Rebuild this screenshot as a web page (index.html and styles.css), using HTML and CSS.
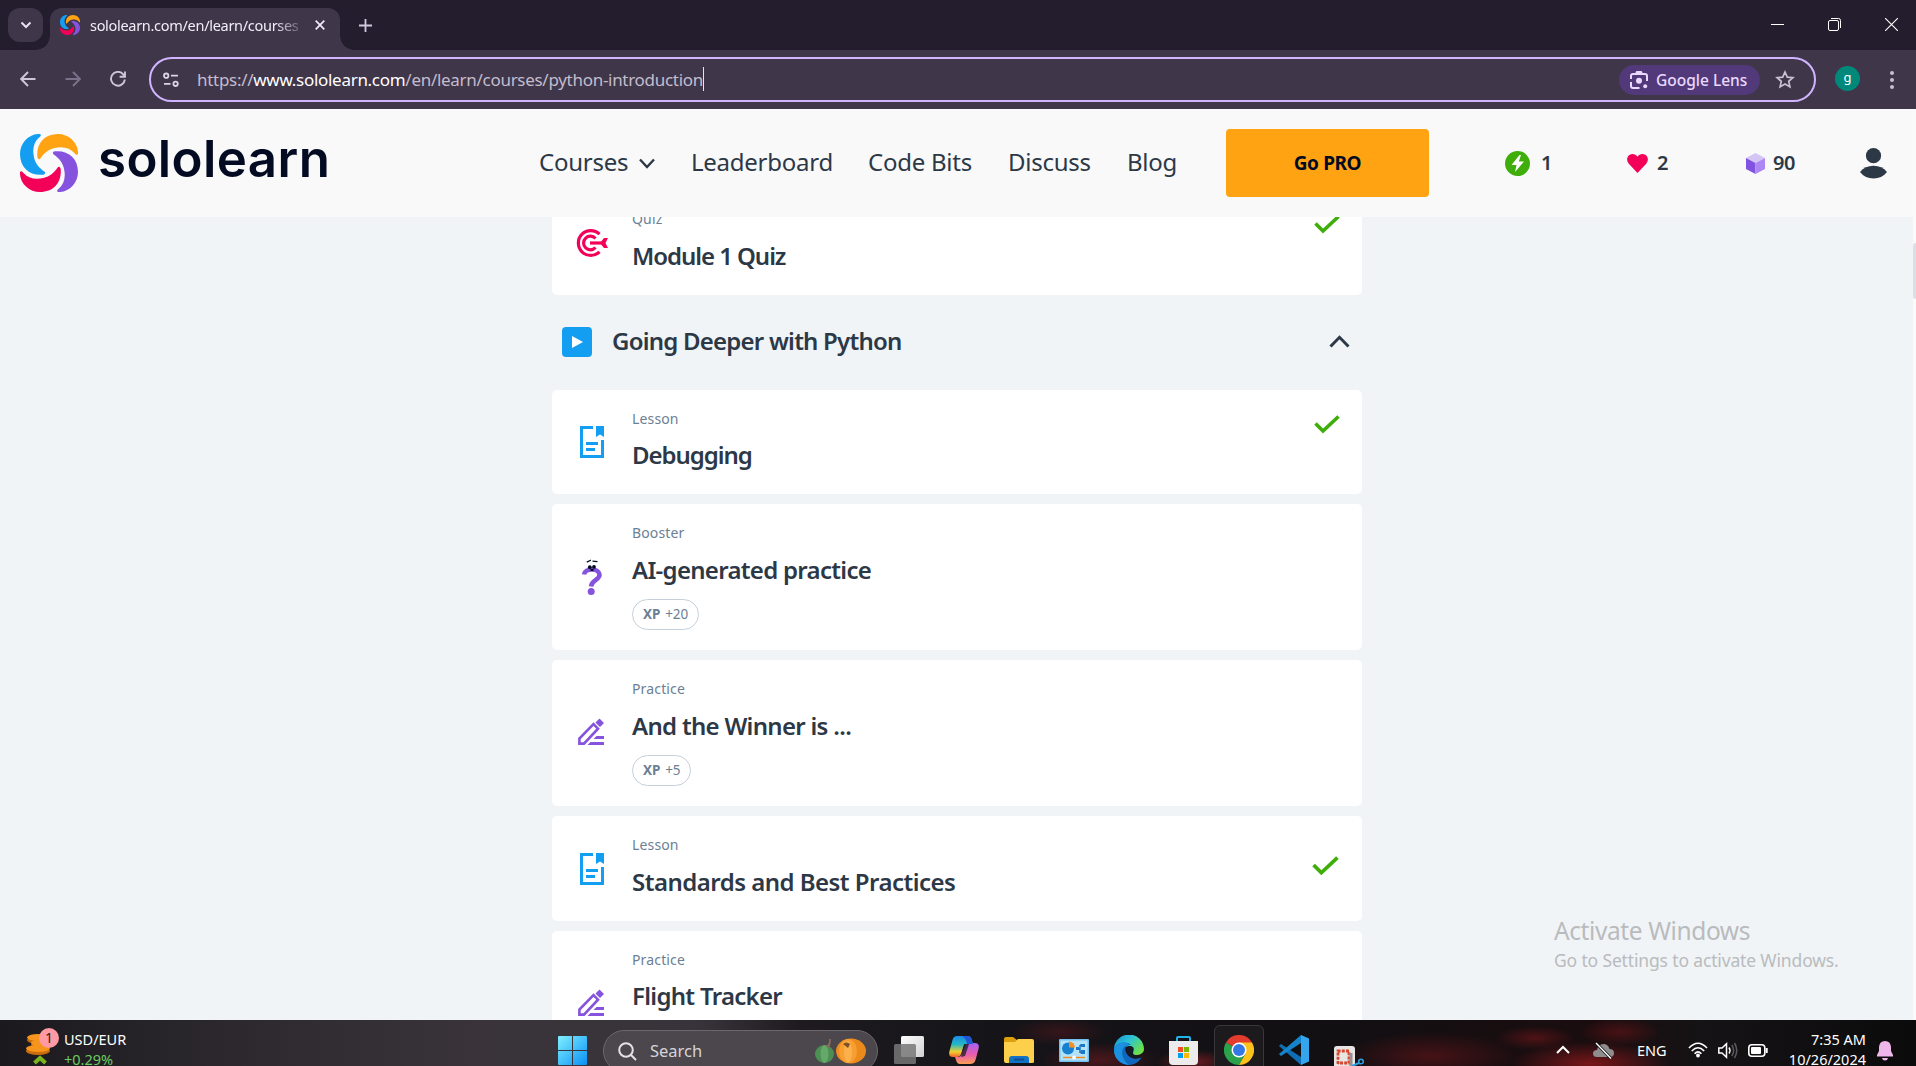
FILE: index.html
```html
<!DOCTYPE html>
<html lang="en">
<head>
<meta charset="utf-8">
<title>sololearn.com/en/learn/courses/python-introduction</title>
<link rel="stylesheet" href="styles.css">
</head>
<body>
<svg class="defs" aria-hidden="true">
  <defs>
    <path id="blade" d="M52 70C48 30 72 0 114 0C148 0 176 28 174 60Q170 66 164 58C150 42 130 36 104 42C84 46 70 60 62 72Q56 80 52 70Z"/>
    <symbol id="mark" viewBox="0 0 174 174">
      <use href="#blade" fill="#ffa313"/>
      <use href="#blade" fill="#149ef2" transform="rotate(-90 87 87)"/>
      <use href="#blade" fill="#f30059" transform="rotate(180 87 87)"/>
      <use href="#blade" fill="#8553de" transform="rotate(90 87 87)"/>
    </symbol>
    <symbol id="lesson" viewBox="0 0 24 32">
      <path d="M13 1.5H1.5V30.5H22.5V14" fill="none" stroke="#149ef2" stroke-width="3"/>
      <path d="M16 0H24V11L20 8.5L16 11ZM6 16H18V19H6ZM6 22H15V25H6Z" fill="#149ef2"/>
    </symbol>
    <symbol id="pencil" viewBox="0 0 26 27">
      <path d="M1.400 25.600V20.500L15.500 6.200L20 10.700L6 25.600Z" fill="none" stroke="#8553de" stroke-width="2.600"/>
      <path d="M17.500 4.500L21.500 0.500L26 5L22 9ZM18.500 18H26V21H15.500ZM12.500 24H26V27H9.500Z" fill="#8553de"/>
    </symbol>
    <symbol id="check" viewBox="0 0 26 19">
      <path d="M1.500 8.500L9 16L24.500 1.500" fill="none" stroke="#3fae0b" stroke-width="3.600"/>
    </symbol>
  </defs>
</svg>

<div class="screen">
  <div class="tabstrip">
    <div class="tab-search"><svg width="12" height="8" viewBox="0 0 12 8"><path d="M1.500 1.500L6 6L10.500 1.500" fill="none" stroke="#e8e0f0" stroke-width="2"/></svg></div>
    <div class="tab">
      <svg class="favicon" width="20" height="20"><use href="#mark"/></svg>
      <span class="tab-title">sololearn.com/en/learn/courses</span>
      <svg width="10" height="10" viewBox="0 0 10 10"><path d="M.7.7L9.300 9.300M9.300.7L.7 9.300" stroke="#f2ecf8" stroke-width="1.700"/></svg>
    </div>
    <svg class="plus" width="13" height="13" viewBox="0 0 13 13"><path d="M6.500 0V13M0 6.500H13" stroke="#d3c9de" stroke-width="1.800"/></svg>
    <div class="window-controls">
      <svg width="13" height="13" viewBox="0 0 13 13"><path d="M0 6.500H13" stroke="#fff"/></svg>
      <svg width="13" height="13" viewBox="0 0 13 13" fill="none" stroke="#fff"><rect x=".5" y="2.500" width="10" height="10" rx="1.500"/><path d="M3 .5H10.500Q12.500.5 12.500 2.500V10"/></svg>
      <svg width="13" height="13" viewBox="0 0 13 13"><path d="M0 0L13 13M13 0L0 13" stroke="#fff" stroke-width="1.100"/></svg>
    </div>
  </div>

  <div class="toolbar">
    <div class="nav-buttons">
      <svg width="16" height="16" viewBox="0 0 16 16" fill="none" stroke="#cfc5da" stroke-width="1.900"><path d="M15.500 8H1.500M8 1L1.200 8L8 15"/></svg>
      <svg width="16" height="16" viewBox="0 0 16 16" fill="none" stroke="#7b7188" stroke-width="1.900"><path d="M.5 8H14.500M8 1L14.800 8L8 15"/></svg>
      <svg width="16" height="16" viewBox="0 0 16 16" fill="none" stroke="#cfc5da" stroke-width="1.900"><path d="M14.800 8.500A6.900 6.900 0 1 1 13.200 3.300L14.500 5M15 .5V5.800H9.600"/></svg>
    </div>
    <div class="omnibox">
      <svg width="16" height="16" viewBox="0 0 16 16" fill="none" stroke="#ddd3e8" stroke-width="1.800"><circle cx="3.200" cy="3.700" r="2.200"/><path d="M8 3.700H15M1 11.800H7.500"/><circle cx="12.600" cy="11.800" r="2.200"/></svg>
      <span class="url">https://<b>www.sololearn.com</b>/en/learn/courses/python-introduction</span><i class="caret"></i>
      <div class="lens">
        <svg width="18" height="18" viewBox="0 0 18 18" fill="none" stroke="#ead9ff" stroke-width="2"><path d="M1 8V5Q1 3 3 3H15Q17 3 17 5V10M1 11V15Q1 17 3 17H9.500M6 2L7 1H11L12 2"/><circle cx="9" cy="9.800" r="3" fill="#ead9ff" stroke="none"/><circle cx="15.200" cy="15.200" r="2" fill="#ead9ff" stroke="none"/></svg>
        <span>Google Lens</span>
      </div>
      <svg width="20" height="19" viewBox="0 0 20 19"><path d="M10 2L12.300 7.100L17.900 7.700L13.700 11.400L14.900 16.900L10 14.100L5.100 16.900L6.300 11.400L2.100 7.700L7.700 7.100Z" fill="none" stroke="#c9c2d0" stroke-width="1.700"/></svg>
    </div>
    <div class="avatar">g</div>
    <svg class="kebab" width="4" height="18" viewBox="0 0 4 18" fill="#c9bfd4"><circle cx="2" cy="2" r="2"/><circle cx="2" cy="9" r="2"/><circle cx="2" cy="16" r="2"/></svg>
  </div>

  <div class="page">
    <div class="content">
      <header class="site-header">
        <svg class="logo-mark" width="58" height="58"><use href="#mark"/></svg>
        <span class="wordmark">sololearn</span>
        <nav class="menu">
          <a class="m1">Courses</a>
          <svg width="16" height="11" viewBox="0 0 16 11"><path d="M1 1.500L8 9L15 1.500" fill="none" stroke="#2d3846" stroke-width="2.400"/></svg>
          <a class="m2">Leaderboard</a>
          <a class="m3">Code Bits</a>
          <a class="m4">Discuss</a>
          <a class="m5">Blog</a>
        </nav>
        <button class="pro">Go PRO</button>
        <div class="stat bits">
          <svg width="25" height="25" viewBox="0 0 25 25"><circle cx="12.500" cy="12.500" r="12.500" fill="#3fae0b"/><path d="M14.500 4L6.500 14H11.500L10 21L19 10.500H13.800L16 4Z" fill="#fff"/></svg>
          <span>1</span>
        </div>
        <div class="stat hearts">
          <svg width="21" height="19" viewBox="0 0 21 19"><path d="M10.500 19L1.800 9.800C-.9 6.500-.2 2.300 2.800.7C5.600-.7 8.800.2 10.500 2.700C12.200.2 15.400-.7 18.200.7C21.200 2.300 21.900 6.500 19.200 9.800Z" fill="#f30059"/></svg>
          <span>2</span>
        </div>
        <div class="stat gems">
          <svg width="19" height="21" viewBox="0 0 19 21"><path d="M9.500 0L19 5L9.500 10L0 5Z" fill="#d3c6f5"/><path d="M0 5L9.500 10V21L0 16Z" fill="#8252e0"/><path d="M19 5L9.500 10V21L19 16Z" fill="#ad87f3"/></svg>
          <span>90</span>
        </div>
        <svg class="person" width="27" height="31" viewBox="0 0 27 31" fill="#2d3846"><circle cx="13.500" cy="7.700" r="7.600"/><path d="M0 24Q5 17.800 13.500 17.800Q22 17.800 27 24Q22 30.500 13.500 30.500Q5 30.500 0 24Z"/></svg>
      </header>

      <main class="course">
        <article class="card">
          <div class="card-icon"><svg width="32" height="28" viewBox="0 0 32 28" fill="none" stroke="#f30059" stroke-width="3.200"><path d="M23.500 5.200A12.400 12.400 0 1 0 23.500 22.800"/><path d="M19.500 9.500A6.800 6.800 0 1 0 19.500 18.500"/><path d="M14 14H26"/><path d="M24 14L28 9H32L29.500 14L32 19H28Z" fill="#f30059" stroke="none"/></svg></div>
          <div class="card-body"><p class="kind">Quiz</p><h3 class="tight">Module 1 Quiz</h3></div>
          <svg class="done" width="26" height="19"><use href="#check"/></svg>
        </article>
        <div class="module">
          <svg width="30" height="30" viewBox="0 0 30 30"><rect width="30" height="30" rx="4" fill="#149ef2"/><path d="M10 9L21 15L10 21Z" fill="#fff"/></svg>
          <h2>Going Deeper with Python</h2>
          <svg width="21" height="13" viewBox="0 0 21 13"><path d="M1.500 11.500L10.500 2.300L19.500 11.500" fill="none" stroke="#2d3846" stroke-width="3"/></svg>
        </div>
        <article class="card first">
          <div class="card-icon"><svg width="24" height="32"><use href="#lesson"/></svg></div>
          <div class="card-body"><p class="kind">Lesson</p><h3 class="tight">Debugging</h3></div>
          <svg class="done" width="26" height="19"><use href="#check"/></svg>
        </article>
        <article class="card">
          <div class="card-icon"><svg width="22" height="36" viewBox="0 0 22 36"><path d="M3 15.500C4 9 17.500 8.500 18.500 15.500C19 21 10.500 20.500 10 27.500" fill="none" stroke="#8553de" stroke-width="4.600"/><circle cx="10.200" cy="32.500" r="3.500" fill="#8553de"/><g fill="#030b23"><circle cx="8.800" cy="8.200" r="1.900"/><circle cx="13" cy="7.900" r="1.900"/><path d="M9.500 10H12.500V12H9.500ZM5.500 2.500L10 .5V1.800L6 3.800ZM11.500 1.500L16.500 2V3.200L11.500 2.800Z"/></g></svg></div>
          <div class="card-body"><p class="kind">Booster</p><h3>AI-generated practice</h3><span class="xp"><b>XP</b> +20</span></div>
        </article>
        <article class="card">
          <div class="card-icon pen"><svg width="26" height="27"><use href="#pencil"/></svg></div>
          <div class="card-body"><p class="kind">Practice</p><h3>And the Winner is ...</h3><span class="xp"><b>XP</b> +5</span></div>
        </article>
        <article class="card">
          <div class="card-icon"><svg width="24" height="32"><use href="#lesson"/></svg></div>
          <div class="card-body"><p class="kind">Lesson</p><h3 class="loose">Standards and Best Practices</h3></div>
          <svg class="done mid" width="27" height="20"><use href="#check"/></svg>
        </article>
        <article class="card last">
          <div class="card-icon pen"><svg width="26" height="27"><use href="#pencil"/></svg></div>
          <div class="card-body"><p class="kind">Practice</p><h3>Flight Tracker</h3></div>
        </article>
      </main>
    </div>
    <div class="scrollbar"><div class="thumb"></div></div>
    <div class="watermark"><p class="wm-title">Activate Windows</p><p class="wm-text">Go to Settings to activate Windows.</p></div>
  </div>

  <footer class="taskbar">
    <div class="widget">
      <svg width="36" height="38" viewBox="0 0 36 38">
        <g fill="#c96d0c"><ellipse cx="12" cy="13" rx="11" ry="4"/><ellipse cx="15" cy="18" rx="10" ry="4"/><ellipse cx="12" cy="24" rx="12" ry="4"/></g>
        <g fill="#f7941d"><ellipse cx="12" cy="10.500" rx="11" ry="3.500"/><ellipse cx="15" cy="16" rx="10" ry="3.500"/><ellipse cx="12" cy="21.500" rx="12" ry="3.500"/></g>
        <path d="M8.500 36L14 31L19.500 36" fill="none" stroke="#7ab51d" stroke-width="4"/>
        <circle cx="23" cy="11" r="10" fill="#ff9aa4"/>
        <text x="23" y="16" text-anchor="middle" class="badge">1</text>
      </svg>
      <div class="rates"><p>USD/EUR</p><p class="up">+0.29%</p></div>
    </div>
    <div class="apps">
      <svg class="start" width="29" height="29" viewBox="0 0 29 29"><defs><linearGradient id="win" x2="1" y2="1" gradientUnits="userSpaceOnUse" gradientTransform="scale(29)"><stop stop-color="#7ff0ff"/><stop offset="1" stop-color="#0a90f5"/></linearGradient></defs><path fill="url(#win)" d="M0 1Q0 0 1 0H14V14H0ZM15 0H28Q29 0 29 1V14H15ZM0 15H14V29H1Q0 29 0 28ZM15 15H29V28Q29 29 28 29H15Z"/></svg>
      <div class="search">
        <svg width="19" height="19" viewBox="0 0 19 19" fill="none" stroke="#e4e2e5" stroke-width="2"><circle cx="8" cy="8" r="6.800"/><path d="M12.800 12.800L18 18"/></svg>
        <span>Search</span>
        <svg width="51" height="26" viewBox="0 0 51 26"><ellipse cx="9.500" cy="16" rx="9.500" ry="9" fill="#4c8f52"/><ellipse cx="9.500" cy="16" rx="4" ry="9" fill="#66a869"/><path d="M11 8Q15 5 14 1L16 1Q16 6 14 10Z" fill="#8c6a5a"/><ellipse cx="36" cy="13" rx="15" ry="12.500" fill="#ec8a1c"/><ellipse cx="33" cy="13" rx="9" ry="12" fill="#f79f31"/><ellipse cx="33" cy="14" rx="4" ry="11" fill="#fbb04c"/><path d="M28 6Q32 3 35 6L33 10Z" fill="#80502a"/></svg>
      </div>
      <svg class="taskview" width="30" height="28" viewBox="0 0 30 28"><defs><linearGradient id="tv" x2="1" y2="1"><stop stop-color="#fff"/><stop offset="1" stop-color="#d0d0d0"/></linearGradient></defs><rect x="7" width="23" height="21" rx="1.500" fill="url(#tv)"/><rect y="8" width="22" height="20" rx="1.500" fill="#777" opacity=".85"/></svg>
      <svg class="copilot" width="30" height="28" viewBox="0 0 30 28"><defs><linearGradient id="cpa" x2="0" y2="1"><stop stop-color="#1b8be8"/><stop offset=".4" stop-color="#23b8c4"/><stop offset=".75" stop-color="#f3cf2e"/><stop offset="1" stop-color="#f2652e"/></linearGradient><linearGradient id="cpb" x2="0" y2="1"><stop stop-color="#a162f0"/><stop offset=".55" stop-color="#ea5cae"/><stop offset="1" stop-color="#fb9f52"/></linearGradient></defs><path d="M8 0H19Q21.500 0 22.500 3L24 8H18Q15 8 14 12L12 18Q11 21 8 21H4Q-1 21 .5 15L3.500 4Q4.500 0 8 0Z" fill="url(#cpa)"/><path d="M22 7H26Q31 7 29.500 13L26.500 24Q25.500 28 21 28H11Q8 28 7 24L6 21H9Q12 21 13 17L16 10Q17 7 22 7Z" fill="url(#cpb)"/><path d="M12 21L15 8H20L16 20Z" fill="#1c1a20" opacity=".75"/><path d="M13 0H19Q21.500 0 22.500 3L24 8H18Q17 2 13 0Z" fill="#1f57d6"/></svg>
      <svg class="folder" width="30" height="27" viewBox="0 0 30 27"><path d="M0 2Q0 0 2 0H9L13 3V8H0Z" fill="#dca00f"/><path d="M0 5H11L14 2H28Q30 2 30 4V25Q30 26 28 26H2Q0 26 0 24Z" fill="#fcd04a"/><path d="M5 26V22Q5 19 8 19H22Q25 19 25 22V26Z" fill="#1272c4"/><path d="M10 22.500H20" stroke="#0d4d91" stroke-width="2"/></svg>
      <svg class="panel" width="30" height="23" viewBox="0 0 30 23"><rect width="30" height="23" rx="1" fill="#6fc0ee"/><rect x="1.500" y="1.500" width="27" height="20" fill="#b4e2fa"/><circle cx="9" cy="9.500" r="6" fill="#1681d1"/><path d="M10 8.500V2.500A6 6 0 0 1 16 8.500Z" fill="#f68f1e"/><path d="M18 10H21M21 6V14M21 6H24M21 13.500H24" stroke="#136bb5" stroke-width="1.400"/><path d="M22 5H26V8H22ZM22 11H26V15H22ZM17 8H20V11H17Z" fill="#1978c8"/><path d="M4 18.500H26" stroke="#f08a1c" stroke-width="1.400"/><circle cx="15" cy="18.500" r="1.900" fill="#fff"/></svg>
      <svg class="edge" width="30" height="30" viewBox="0 0 30 30"><defs><linearGradient id="ed" x2="1" y2=".6"><stop stop-color="#168bd0"/><stop offset=".5" stop-color="#2cc3d6"/><stop offset="1" stop-color="#6be04a"/></linearGradient></defs><path d="M0 15A15 15 0 0 1 30 14C30 18 26 20 22 20C18 20 18 18 19 16Q20 12 15 11Z" fill="url(#ed)"/><path d="M0 15C1 8 11 5 17 10C11 9 10 15 13 19C16 24 23 25 28 22Q23 30 15 30A15 15 0 0 1 0 15Z" fill="#1067bd"/><path d="M0 15C1 8 11 5 15 10C7 10 5 22 15 30A15 15 0 0 1 0 15Z" fill="#1b8fe0"/><path d="M15 11Q21 11 19.500 16Q18 19 21 20Q24 23 28 22Q19 25 14 20Q10 14 15 11Z" fill="#141a26"/></svg>
      <svg class="store" width="29" height="29" viewBox="0 0 29 29"><path d="M8 7V2Q8 1 9 1H20Q21 1 21 2V7" fill="none" stroke="#1fb3ee" stroke-width="2"/><path d="M0 5H29V25Q29 29 25 29H4Q0 29 0 25Z" fill="#ececec"/><path d="M9 11H14V16H9Z" fill="#f04e24"/><path d="M15 11H20V16H15Z" fill="#7db900"/><path d="M9 17H14V22H9Z" fill="#009fee"/><path d="M15 17H20V22H15Z" fill="#fdb800"/></svg>
      <div class="active-app">
        <svg width="30" height="30" viewBox="0 0 30 30"><path d="M15 15L2 7.500A15 15 0 0 1 28 7.500Z" fill="#e33b2e"/><path d="M15 15L2 7.500A15 15 0 0 0 15 30L21.500 18.800Z" fill="#2aa24c"/><path d="M15 7.500H28A15 15 0 0 1 15 30L21.500 18.800Z" fill="#fcc21b"/><circle cx="15" cy="15" r="7.500" fill="#fff"/><circle cx="15" cy="15" r="6" fill="#3478e6"/></svg>
      </div>
      <svg class="code" width="30" height="30" viewBox="0 0 30 30"><path d="M2 9L0 11L22 30V22Z" fill="#0f6fb5"/><path d="M2 21L0 19L22 0V8Z" fill="#1684cb"/><path d="M22 0L30 3.500V26.500L22 30Z" fill="#35a6ee"/></svg>
      <svg class="snip" width="30" height="20" viewBox="0 0 30 20"><path d="M0 20V3Q0 0 3 0H18Q21 0 21 3V20Z" fill="#e8e4e3"/><path d="M4 18V5H15V17H4" fill="none" stroke="#d5482f" stroke-width="2.800" stroke-dasharray="3 1.200"/><path d="M17 7V20" stroke="#989090" stroke-width="3"/><circle cx="27" cy="15.500" r="2.300" fill="none" stroke="#2a9fe0" stroke-width="1.600"/><path d="M18 20L25 17" stroke="#2a9fe0" stroke-width="2"/></svg>
    </div>
    <div class="tray">
      <svg class="up-arrow" width="14" height="9" viewBox="0 0 14 9"><path d="M1 8L7 2L13 8" fill="none" stroke="#fff" stroke-width="2"/></svg>
      <svg class="cloud" width="21" height="17" viewBox="0 0 21 17"><path d="M4 15Q0 15 0 11.500Q0 8 4 8Q5 2 10.500 2Q15 2 16.500 7Q21 7 21 11Q21 15 17 15Z" fill="#8d8d8f"/><path d="M3 1L18 16.500" stroke="#121212" stroke-width="3"/><path d="M3 1L18 16.500" stroke="#fff" stroke-width="1.400"/></svg>
      <span class="lang">ENG</span>
      <svg class="wifi" width="20" height="16" viewBox="0 0 20 16" fill="none" stroke="#fff" stroke-width="1.600"><path d="M1 6Q10-3.500 19 6M3.800 9Q10 2.500 16.200 9M6.600 11.700Q10 8 13.400 11.700"/><circle cx="10" cy="13.500" r="1.900" fill="#fff" stroke="none"/></svg>
      <svg class="sound" width="20" height="17" viewBox="0 0 20 17" fill="none" stroke="#fff" stroke-width="1.500"><path d="M.8 6H4L8.500 1.800V15.200L4 11H.8Z"/><path d="M11 5.500Q13 8.500 11 11.500"/><path d="M13.800 3Q17.500 8.500 13.800 14M16.500 1Q21 8.500 16.500 16" stroke="#5c5a60"/></svg>
      <svg class="battery" width="20" height="13" viewBox="0 0 20 13"><rect x=".8" y=".8" width="16" height="11.400" rx="3" fill="none" stroke="#fff" stroke-width="1.600"/><rect x="3" y="3" width="10" height="7" rx="1" fill="#fff"/><path d="M18.700 4V9" stroke="#fff" stroke-width="2"/></svg>
      <div class="clock"><p>7:35 AM</p><p>10/26/2024</p></div>
      <svg class="bell" width="16" height="20" viewBox="0 0 16 20" fill="#efb6ec"><path d="M2 6Q2.500 0 8 0Q13.500 0 14 6V10L16 14V15.500H0V14L2 10ZM5 17H11Q10.500 19.500 8 19.500Q5.500 19.500 5 17Z"/></svg>
    </div>
  </footer>
</div>
</body>
</html>
```
FILE: styles.css
```css
* { box-sizing: border-box; }
body { margin: 0; font-family: "Noto Sans", "Open Sans", sans-serif; color: #2d3846; }
p, h2, h3 { margin: 0; }
svg { display: block; flex: none; }
.defs { position: absolute; width: 0; height: 0; }
.screen { width: 1916px; height: 1066px; display: flex; flex-direction: column; overflow: hidden; }

/* browser chrome */
.tabstrip { height: 50px; flex: none; display: flex; align-items: flex-start; padding: 8px 18px 0 8px; background: #241d2e; }
.tab-search { width: 35px; height: 34px; border-radius: 12px; background: #3f364a; display: flex; align-items: center; justify-content: center; }
.tab { width: 290px; height: 42px; margin-left: 7px; padding: 0 15px 8px 10px; border-radius: 12px 12px 0 0; background: #3f364a; display: flex; align-items: center; position: relative; }
.tab::before, .tab::after { content: ""; position: absolute; bottom: 0; width: 14px; height: 14px; }
.tab::before { left: -14px; background: radial-gradient(circle at 0 0, transparent 13.5px, #3f364a 14px); }
.tab::after { right: -14px; background: radial-gradient(circle at 100% 0, transparent 13.5px, #3f364a 14px); }
.tab-title { flex: 1; margin: 0 15px 0 10px; overflow: hidden; white-space: nowrap; font-size: 14.5px; letter-spacing: -.3px; line-height: 20px; color: #f2edf7; -webkit-mask-image: linear-gradient(90deg, #000 88%, #0003); mask-image: linear-gradient(90deg, #000 88%, #0003); }
.plus { margin: 11px 0 0 19px; }
.window-controls { margin: 10px 0 0 auto; display: flex; gap: 44px; }
.toolbar { height: 59px; flex: none; display: flex; align-items: center; background: #3f364a; padding: 0 22px 0 20px; }
.nav-buttons { display: flex; gap: 29px; width: 129px; padding-bottom: 1px; }
.omnibox { width: 1667px; height: 45px; border: 2px solid #d0b4ff; border-radius: 23px; display: flex; align-items: center; padding: 0 19px 0 12px; }
.url { margin-left: 18px; font-size: 17px; letter-spacing: -.29px; line-height: 26px; color: #c4bccd; white-space: nowrap; }
.url b { font-weight: 400; color: #fff; }
.caret { width: 1px; height: 24px; margin-top: -2px; background: #e8e0f0; }
.lens { margin: 0 15px 0 auto; width: 141px; height: 30px; border-radius: 15px; background: #52397a; display: flex; align-items: center; gap: 8px; padding-left: 11px; font-size: 15.5px; font-weight: 500; color: #ead9ff; white-space: nowrap; }
.avatar { width: 25px; height: 25px; margin: -2px 0 0 19px; border-radius: 50%; background: #00897b; color: #fff; font-size: 13px; line-height: 22px; text-align: center; }
.kebab { margin-left: auto; }

/* site */
.page { height: 911px; flex: none; display: flex; position: relative; overflow: hidden; }
.content { flex: 1; display: flex; flex-direction: column; background: #f0f4f7; overflow: hidden; }
.scrollbar { width: 3px; background: #fafafa; padding-top: 134px; }
.thumb { height: 56px; background: #dcdfe3; border-radius: 3px 0 0 3px; }
.site-header { height: 108px; flex: none; display: flex; align-items: center; background: #f9f9f9; padding-left: 20px; position: relative; z-index: 1; }
.wordmark { width: 231px; margin: -9px 0 0 20px; font: 600 51px/60px Inter, sans-serif; letter-spacing: .4px; color: #030b23; }
.menu { width: 687px; margin-left: 210px; display: flex; align-items: center; font-size: 24px; letter-spacing: -.25px; line-height: 32px; white-space: nowrap; padding-bottom: 2px; }
.menu svg { margin: 2px 0 0 12px; }
.m1 { width: 88px; }
.m2 { width: 143px; margin-left: 36px; }
.m3 { width: 106px; margin-left: 34px; }
.m4 { width: 84px; margin-left: 34px; }
.m5 { width: 50px; margin-left: 35px; }
.pro { width: 203px; height: 68px; border: 0; padding: 0; border-radius: 4px; background: #ffa313; color: #030b23; font: 700 19px/26px "Noto Sans", sans-serif; letter-spacing: -.4px; }
.stat { display: flex; align-items: center; font-size: 20px; font-weight: 600; line-height: 26px; letter-spacing: -.5px; }
.bits { margin-left: 76px; gap: 11px; width: 122px; }
.hearts { gap: 9px; width: 119px; }
.gems { gap: 8px; width: 114px; }
.course { width: 810px; margin: -27px 0 0 552px; flex: none; }
.card { min-height: 105px; margin-bottom: 10px; padding: 20px 0; background: #fff; border-radius: 5px; display: flex; }
.card:first-child { margin-bottom: 0; }
.card.first { height: 104px; min-height: 0; }
.card.last { min-height: 146px; }
.card-icon { width: 80px; display: flex; align-items: center; justify-content: center; }
.card-icon.pen { padding: 0 2px 4px 0; }
.kind { font-size: 14px; letter-spacing: .15px; line-height: 18px; color: #6b7f95; }
.card h3, .module h2 { font-size: 24px; line-height: 32px; font-weight: 600; letter-spacing: -.7px; white-space: nowrap; }
.card h3 { margin-top: 12px; }
.card.first h3, .card.last h3 { margin-top: 11px; }
.card h3.tight { letter-spacing: -1.05px; }
.card h3.loose { letter-spacing: -.52px; }
.xp { display: inline-flex; align-items: center; gap: 5px; height: 31px; margin-top: 13px; padding: 0 10px 1px; border: 1px solid #c5d0da; border-radius: 16px; font-size: 13.500px; letter-spacing: -.1px; color: #6b7f95; vertical-align: top; }
.done { margin: 5px 22px 0 auto; }
.done.mid { margin: 20px 23px 0 auto; }
.module { height: 95px; display: flex; align-items: center; padding: 0 12px 2px 10px; }
.module h2 { margin: -2px auto 0 20px; letter-spacing: -.77px; }
.watermark { position: absolute; left: 1554px; top: 805px; color: #b9bbbd; white-space: nowrap; }
.wm-title { font-size: 24.500px; letter-spacing: -.4px; line-height: 33px; }
.wm-text { font-size: 17.500px; letter-spacing: -.15px; line-height: 26px; }

/* taskbar */
.taskbar { height: 46px; flex: none; display: flex; position: relative; overflow: hidden; color: #fff;
  background:
    radial-gradient(ellipse 60px 18px at 1100px 40px, #8a1c2277, transparent),
    radial-gradient(ellipse 40px 12px at 1195px 42px, #b0242a88, transparent),
    radial-gradient(ellipse 50px 14px at 1060px 12px, #7a1a2255, transparent),
    radial-gradient(ellipse 80px 22px at 1590px 44px, #b81c2099, transparent),
    radial-gradient(ellipse 40px 12px at 1535px 18px, #8c181c77, transparent),
    radial-gradient(ellipse 40px 14px at 1620px 12px, #8c181c66, transparent),
    radial-gradient(ellipse 90px 24px at 1430px 36px, #7d171b77, transparent),
    linear-gradient(90deg, #1b191d 0, #29262b 180px, #3a343a 480px, #38333a 700px, #1d1b20 800px, #151418 1000px, #120f12 1350px, #1b0d0f 1600px, #151315 1700px, #0c0b0c 1916px); }
.widget { width: 558px; padding-left: 26px; display: flex; gap: 2px; align-items: flex-start; font-size: 14.500px; line-height: 20px; }
.widget svg { margin-top: 7px; }
.badge { font: 14px "Noto Sans", sans-serif; fill: #222; }
.rates { padding-top: 9px; }
.up { color: #6ccb5f; }
.apps { width: 998px; display: flex; align-items: flex-start; }
.start { margin-top: 16px; }
.search { width: 275px; height: 42px; margin: 10px 0 -6px 16px; border: 1px solid #6b676d; border-radius: 21px; background: #4b474d; display: flex; align-items: center; padding: 0 11px 0 14px; color: #d6d4d7; font-size: 16.500px; line-height: 24px; }
.search span { margin: 0 auto 0 13px; }
.taskview { margin: 16px 0 0 16px; }
.copilot { margin: 16px 0 0 25px; }
.folder { margin: 17px 0 0 25px; }
.panel { margin: 19px 0 0 25px; }
.edge { margin: 15px 0 0 25px; }
.store { margin: 16px 0 0 25px; }
.active-app { width: 50px; height: 50px; margin: 5px 0 -9px 16px; padding: 9px; border: 1px solid #3a373b; border-radius: 6px; background: #1d1a1e; }
.code { margin: 15px 0 0 15px; }
.snip { margin: 26px 0 0 25px; }
.tray { width: 337px; display: flex; align-items: flex-start; font-size: 14.500px; line-height: 20px; }
.up-arrow { margin-top: 25px; }
.cloud { margin: 22px 0 0 23px; }
.lang { width: 28px; margin: 20px 0 0 23px; }
.wifi { margin: 22px 0 0 23px; }
.sound { margin: 22px 0 0 10px; }
.battery { margin: 24px 0 0 10px; }
.clock { width: 99px; padding-top: 9px; text-align: right; }
.bell { margin: 21px 0 0 11px; }
```
